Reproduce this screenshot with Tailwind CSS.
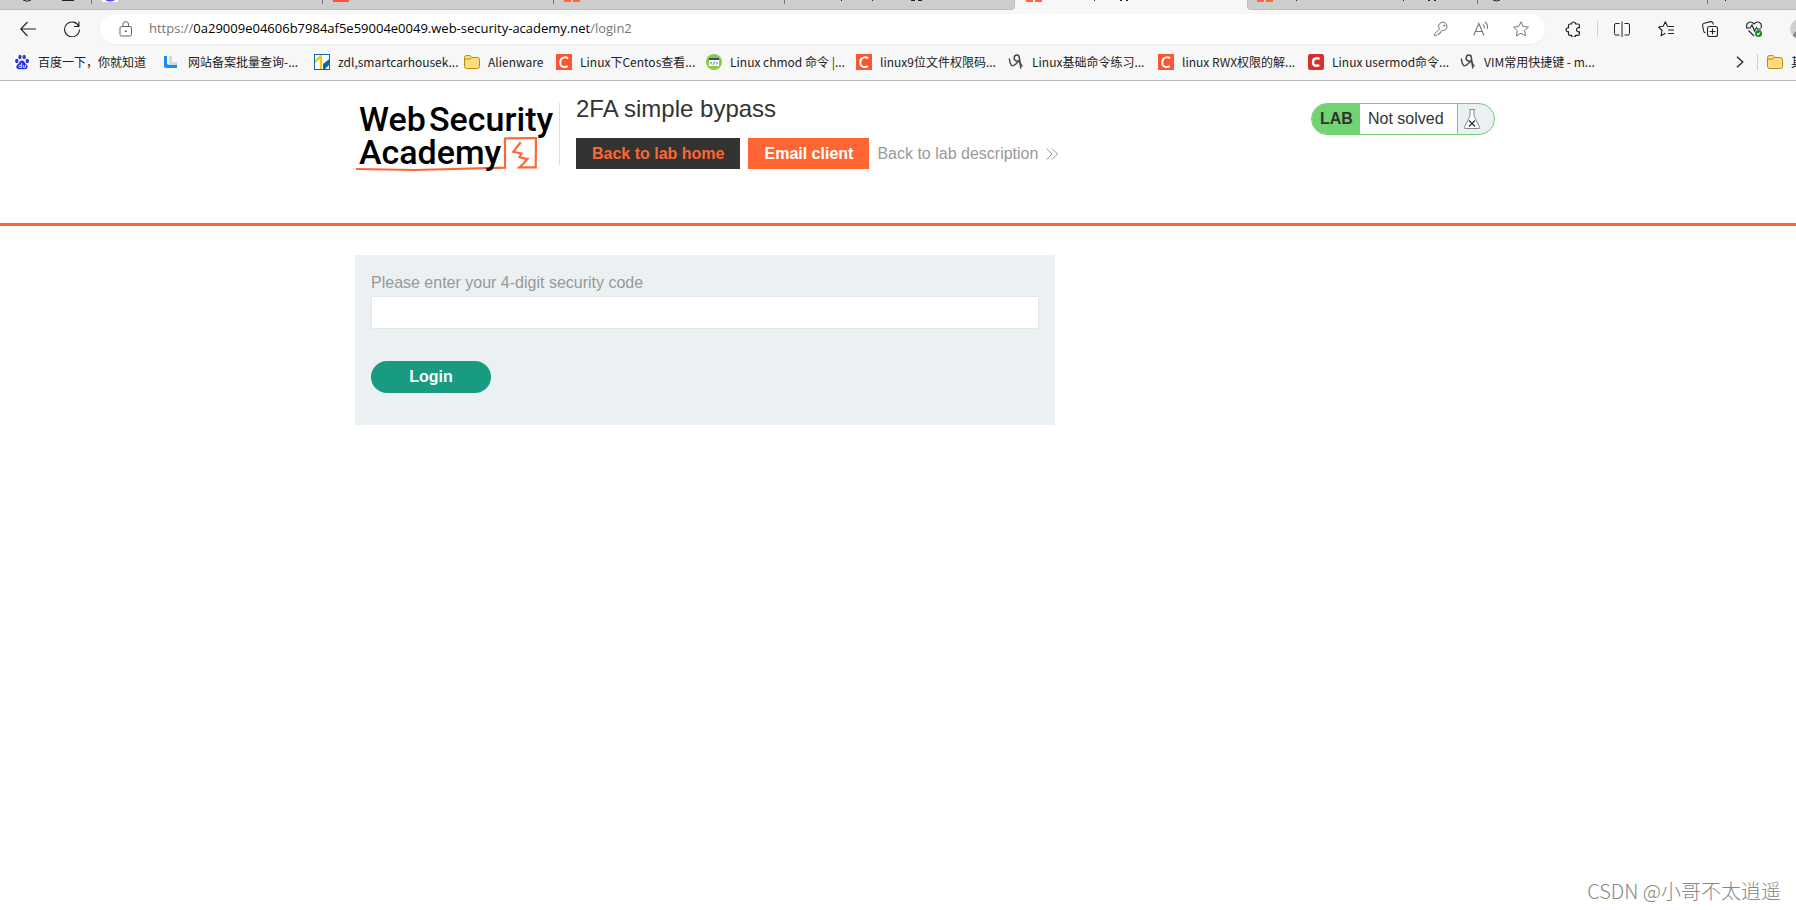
<!DOCTYPE html>
<html lang="en">
<head>
    <meta charset="UTF-8">
    <meta name="viewport" content="width=device-width, initial-scale=1.0">
    <title>2FA simple bypass</title>
    <script src="https://cdn.jsdelivr.net/npm/@tailwindcss/browser@4"></script>
</head>
<body class="relative min-h-screen overflow-x-hidden bg-white font-['Liberation_Sans',Arial,sans-serif] text-[#333332]">
    <!-- Shared icons -->
    <svg class="hidden">
        <symbol id="csdn" viewBox="0 0 16 16">
            <rect width="16" height="16" fill="#fc5531"/>
            <path d="M12.2 4.3C10 2.8 4.6 2.7 4.2 8.1c-.3 5.300 4.300 5.500 7.600 4.200" fill="none" stroke="#fff" stroke-width="2"/>
        </symbol>
        <symbol id="csdn-red" viewBox="0 0 16 16">
            <rect width="16" height="16" rx="2" fill="#d5302a"/>
            <path d="M11.600 5C9.500 3.500 5 4 5 8.200c0 4 4 4.200 6.200 2.700" fill="none" stroke="#fff" stroke-width="2.400"/>
        </symbol>
        <symbol id="folder" viewBox="0 0 16 16">
            <path d="M.5 3.500Q.5 1.500 2.500 1.500H6L8 3.500H13.500Q15.500 3.500 15.500 5.500V12.500Q15.500 14.500 13.500 14.500H2.500Q.5 14.500 .5 12.500Z" fill="#ffdc7c" stroke="#b98a14"/>
            <path d="M1 5H6L7.500 3.500" fill="none" stroke="#b98a14"/>
        </symbol>
        <symbol id="sketch" viewBox="0 0 16 16">
            <path d="M1.200 4.500C2 6 1.500 10 3.500 11.500S8 10 10.500 7.500" fill="none" stroke="#444" stroke-width="1.400"/>
            <path d="M11 6.800C8.500 8 5.700 6.500 6.200 3.500S10.800.2 11.300 3.300L12.800 14.500" fill="none" stroke="#444" stroke-width="1.500"/>
            <path d="M11.500 8L14.500 12.500" stroke="#444" stroke-width="1.300"/>
        </symbol>
    </svg>

    <!-- Tab strip, scrolled mostly out of view -->
    <div class="bg-[#f7f7f7]" role="presentation">
        <svg class="block h-[10px] w-[1796px]" viewBox="0 0 1796 10">
            <path d="M0 0H1014V7Q1014 9.500 1011 9.500H0Z" fill="#cdcdcd"/>
            <path d="M1796 0H1247.500V7Q1247.500 9.500 1250.500 9.500H1796Z" fill="#cdcdcd"/>
            <path d="M0 9.500H1011.500Q1014.500 9.500 1014.500 6.500V0M1796 9.500H1250.500Q1247.500 9.500 1247.500 6.500V0" fill="none" stroke="#bcbcbc"/>
            <path d="M91.500 0V4M322.500 0V4M553.500 0V4M784.500 0V4M1477.500 0V4M1707.500 0V4" stroke="#777"/>
            <path d="M102 0H118V2H102Z" fill="#fff"/>
            <path d="M105 0Q110 3 115 0Z" fill="#4b4be0"/>
            <path d="M333 0H349V2H333Z" fill="#fc5531"/>
            <path d="M564 0H571V2H564ZM573 0H580V2H573ZM1026 0H1033V2H1026ZM1035 0H1042V2H1035ZM1257 0H1264V2H1257ZM1266 0H1273V2H1266Z" fill="#ff6633"/>
            <path d="M23 0Q27 2.500 31 0M62 .5H74M911 .5H915M918 .5H922M1120 .5H1122M1126 .5H1128M1493 0Q1497 2 1500 0M1428 .5H1430M1434 .5H1436" fill="none" stroke="#222"/>
            <path d="M841.500 0V1M872.500 0V1M1094.500 0V1M1296.500 0V1M1403.500 0V1M1725.500 0V1" stroke="#222"/>
        </svg>
    </div>

    <!-- Browser toolbar -->
    <header class="overflow-hidden border-b border-[#b9b9b9] bg-[#f7f7f7] font-['Open_Sans','Noto_Sans_CJK_SC',sans-serif]">
        <div class="flex items-center pt-1">
            <button class="ml-5 shrink-0" aria-label="Back">
                <svg class="size-4" viewBox="0 0 16 16" fill="none" stroke="#222" stroke-width="1.100"><path d="M16 8H.8M7.500 1L.8 8l6.700 7"/></svg>
            </button>
            <button class="ml-7 shrink-0" aria-label="Refresh">
                <svg class="size-4" viewBox="0 0 16 16" fill="none" stroke="#222" stroke-width="1.100"><path d="M14.800 5.500A7.400 7.400 0 1 0 15.400 8.500M14.900.5V5.500H10"/></svg>
            </button>
            <div class="ml-5 flex h-[30px] flex-1 items-center rounded-full bg-white pr-4 pl-[18px] shadow-xs">
                <svg class="size-4 shrink-0" viewBox="0 0 16 16" fill="none" stroke="#666"><rect x="2" y="5.500" width="11.500" height="9.500" rx="1.500"/><path d="M5 5.500V3Q5 .6 7.700 .6T10.500 3V5.500"/><circle cx="7.800" cy="10.200" r=".6" fill="#666"/></svg>
                <a href="#" class="ml-[15px] text-[13px] whitespace-nowrap text-black"><span class="text-[#767676]">https://</span>0a29009e04606b7984af5e59004e0049.web-security-academy.net<span class="text-[#767676]">/login2</span></a>
                <div class="ml-auto flex items-center gap-6">
                    <button aria-label="Passwords">
                        <svg class="size-4" viewBox="0 0 16 16" fill="none" stroke="#777"><path d="M6.600 8.100A4.200 4.200 0 1 1 9 9.500L7.600 10.500V12H6.200V13.300H4.500L3.200 14.600H1.300V13Z" stroke-linejoin="round"/><circle cx="11.400" cy="4.600" r=".7"/></svg>
                    </button>
                    <button aria-label="Read aloud">
                        <svg class="size-4" viewBox="0 0 16 16" fill="none" stroke="#777" stroke-width="1.100"><path d="M.7 14.500L5.800 2.500L11 14.500M2.600 10.500H9.100M10 3.300Q11.800 4.800 11.300 7.300M12 1Q15.300 3.700 14.200 7.800"/></svg>
                    </button>
                    <button aria-label="Add to favourites">
                        <svg class="size-4" viewBox="0 0 16 16" fill="none" stroke="#777" stroke-linejoin="round"><path d="M8 .8L10.200 5.500L15.400 6.100L11.600 9.700L12.600 14.900L8 12.300L3.400 14.900L4.400 9.700L.6 6.100L5.800 5.500Z"/></svg>
                    </button>
                </div>
            </div>
            <div class="ml-5 flex shrink-0 items-center">
                <button aria-label="Extensions">
                    <svg class="size-4" viewBox="0 0 16 16" fill="none" stroke="#222" stroke-width="1.200" stroke-linejoin="round"><path d="M6.500 3A2 2 0 1 1 10.500 3H13Q14.400 3 14.400 4.300V6.800A2.100 2.100 0 1 0 14.400 10.700V13Q14.400 14.400 13 14.400H10.500A2 2 0 0 1 6.500 14.400H5Q3.500 14.400 3.500 13V10.700A2 2 0 1 1 3.500 6.800V4.300Q3.500 3 5 3Z"/></svg>
                </button>
                <span class="ml-4 h-4 w-px bg-[#cfcfcf]"></span>
                <button class="ml-4" aria-label="Split screen">
                    <svg class="size-4" viewBox="0 0 16 16" fill="none" stroke="#222"><path d="M5.500 2.500H2Q.5 2.500 .5 4V12.500Q.5 14 2 14H5.500M10.500 2.500H14Q15.500 2.500 15.500 4V12.500Q15.500 14 14 14H10.500M8 .5V16"/></svg>
                </button>
                <button class="ml-7" aria-label="Favourites">
                    <svg class="size-4" viewBox="0 0 16 16" fill="none" stroke="#222" stroke-width="1.100" stroke-linejoin="round"><path d="M10.500 5.500L9.500 5.300L7.300.8L5.200 5.300L.6 6L4 9.500L3 14.800L7.500 12.300M10.500 5.500H16M10 9H16M10 12.500H16"/></svg>
                </button>
                <button class="ml-7" aria-label="Collections">
                    <svg class="size-4" viewBox="0 0 16 16" fill="none" stroke="#222" stroke-width="1.100"><rect x="5.500" y="5.500" width="10" height="10" rx="2"/><path d="M10.500 7.500V13.500M7.500 10.500H13.500M3.500 12Q1.800 11.500 1.500 9.500L.6 4.500Q.4 2.700 2.200 2.200L8.500.6Q10.400.4 11 2.200L11.500 3.500"/></svg>
                </button>
                <button class="ml-7" aria-label="Browser essentials">
                    <svg class="size-4" viewBox="0 0 16 16" fill="none" stroke="#222" stroke-width="1.100"><path d="M1 7Q-.3 2.500 3 1.200Q6 .3 8 3Q10 .3 13 1.200Q16.300 2.500 15 7M0 7H4L6 4L8.500 10L10.500 6.500L11.500 8H15M2.500 9.500L8 15"/><circle cx="12.500" cy="12.500" r="3.500" fill="#128a18" stroke="none"/><path d="M11 12.500L12.200 13.600L14 11.500" stroke="#fff"/></svg>
                </button>
                <span class="ml-7 h-5 w-[6px] overflow-hidden">
                    <svg class="h-5 w-5" viewBox="0 0 20 20"><circle cx="10" cy="10" r="10" fill="#d2d0ce"/><circle cx="10" cy="7" r="3.500" fill="#8a8886"/><path d="M3 17Q3 12 10 12T17 17Q10 22 3 17" fill="#8a8886"/></svg>
                </span>
            </div>
        </div>

        <!-- Bookmarks bar -->
        <nav class="flex h-9 items-center gap-4 pl-[14px] font-['Noto_Sans_CJK_SC',sans-serif] text-[12px] text-[#222]">
            <a href="#" class="flex w-[134px] shrink-0 items-center gap-2 whitespace-nowrap">
                <svg class="size-4 shrink-0" viewBox="0 0 16 16" fill="#2f35d8"><rect width="16" height="16" fill="#fff"/><ellipse cx="2.800" cy="7" rx="1.700" ry="2.200"/><ellipse cx="6" cy="3" rx="1.700" ry="2.300"/><ellipse cx="10.200" cy="3" rx="1.700" ry="2.300"/><ellipse cx="13.300" cy="7" rx="1.700" ry="2.200"/><path d="M8 6.500C10.500 6.500 10.500 9 12.500 10.500S14 15.200 11 15.200H5C2 15.200 1.500 12 3.500 10.500S5.500 6.500 8 6.500Z"/><path d="M7.500 9V13.500H5.500Q4.500 12.500 5.500 11.300H7.500M9.300 11V13.300H11.500V11" fill="none" stroke="#fff" stroke-width=".8"/></svg>
                百度一下，你就知道
            </a>
            <a href="#" class="flex w-[134px] shrink-0 items-center gap-2 whitespace-nowrap">
                <svg class="size-4 shrink-0" viewBox="0 0 16 16"><path d="M5 2H8V8H13V11H5Z" fill="#d4d7dc"/><path d="M0 2H3V10L5 11H13V14H2Q0 14 0 12Z" fill="#1b8cf5"/></svg>
                网站备案批量查询-...
            </a>
            <a href="#" class="flex w-[134px] shrink-0 items-center gap-2 whitespace-nowrap">
                <svg class="size-4 shrink-0" viewBox="0 0 16 16"><rect x=".5" y=".5" width="15" height="15" fill="#fff" stroke="#0868ac"/><path d="M1 6L6 1H8V15H6V5L1 9Z" fill="#f9c80e"/><path d="M9 1V10L15 5V11L11 15H9V1Z" fill="#0868ac"/><path d="M10 1H15V5L10 9Z" fill="#fff"/></svg>
                zdl,smartcarhousek...
            </a>
            <a href="#" class="flex w-[76px] shrink-0 items-center gap-2 whitespace-nowrap">
                <svg class="size-4 shrink-0"><use href="#folder"/></svg>
                Alienware
            </a>
            <a href="#" class="flex w-[134px] shrink-0 items-center gap-2 whitespace-nowrap">
                <svg class="size-4 shrink-0"><use href="#csdn"/></svg>
                Linux下Centos查看...
            </a>
            <a href="#" class="flex w-[134px] shrink-0 items-center gap-2 whitespace-nowrap">
                <svg class="size-4 shrink-0" viewBox="0 0 16 16"><circle cx="8" cy="8" r="8" fill="#8cc84b"/><rect x="3" y="4" width="10" height="8" fill="#fff"/><path d="M3 4H13V6H3Z" fill="#35526b"/><path d="M6 7.500L4.500 9L6 10.500M10 7.500L11.500 9L10 10.500M8.500 7.500L7.500 10.500" fill="none" stroke="#35526b" stroke-width=".8"/></svg>
                Linux chmod 命令 |...
            </a>
            <a href="#" class="flex w-[136px] shrink-0 items-center gap-2 whitespace-nowrap">
                <svg class="size-4 shrink-0"><use href="#csdn"/></svg>
                linux9位文件权限码...
            </a>
            <a href="#" class="flex w-[134px] shrink-0 items-center gap-2 whitespace-nowrap">
                <svg class="size-4 shrink-0"><use href="#sketch"/></svg>
                Linux基础命令练习...
            </a>
            <a href="#" class="flex w-[134px] shrink-0 items-center gap-2 whitespace-nowrap">
                <svg class="size-4 shrink-0"><use href="#csdn"/></svg>
                linux RWX权限的解...
            </a>
            <a href="#" class="flex w-[136px] shrink-0 items-center gap-2 whitespace-nowrap">
                <svg class="size-4 shrink-0"><use href="#csdn-red"/></svg>
                Linux usermod命令...
            </a>
            <a href="#" class="flex w-[134px] shrink-0 items-center gap-2 whitespace-nowrap">
                <svg class="size-4 shrink-0"><use href="#sketch"/></svg>
                VIM常用快捷键 - m...
            </a>
            <div class="ml-auto flex shrink-0 items-center">
                <button aria-label="More bookmarks">
                    <svg class="h-3 w-2" viewBox="0 0 8 12" fill="none" stroke="#222" stroke-width="1.300"><path d="M1 .7L6.800 6L1 11.300"/></svg>
                </button>
                <span class="ml-[13px] h-4 w-px bg-[#cfcfcf]"></span>
                <a href="#" class="ml-[9px] flex w-[29px] items-center gap-2 overflow-hidden whitespace-nowrap">
                    <svg class="size-4 shrink-0"><use href="#folder"/></svg>
                    其他收藏夹
                </a>
            </div>
        </nav>
    </header>

    <!-- Lab header -->
    <section class="border-b-3 border-[#ff6633] pr-[301px] pb-[51px] pl-[355px]">
        <div class="flex items-start pt-[19px]">
            <a href="#" class="shrink-0" aria-label="Web Security Academy">
                <svg class="h-[72px] w-[204px]" viewBox="0 0 204 72">
                    <path d="M1 69L60 70L150 67.700V38.500L181 38L180.700 67.300H164.300L168 64L172.500 59L164.500 57.300L166.500 53.500L158.300 51.700L165.700 42.300" fill="none" stroke="#ff6633" stroke-width="2.200"/>
                    <g fill="#000" font-family="Roboto, sans-serif" font-weight="500" font-size="34">
                        <text x="4" y="31">Web</text>
                        <text x="74" y="31">Security</text>
                        <text x="4" y="64">Academy</text>
                    </g>
                </svg>
            </a>
            <div class="mt-[3px] h-[62px] w-px shrink-0 bg-[#dedede]"></div>
            <div class="ml-4">
                <h2 class="text-[24px] leading-[18px]">2FA simple bypass</h2>
                <div class="mt-5 flex items-center gap-2 text-[16px] leading-[31px] whitespace-nowrap">
                    <a href="#" class="bg-[#333332] px-4 font-bold text-[#ff6633]">Back to lab home</a>
                    <button class="bg-[#ff6633] px-4 font-bold text-white">Email client</button>
                    <a href="#" class="flex items-center gap-2 text-[#999]">Back to lab description
                        <svg class="h-3 w-3" viewBox="0 0 12 12" fill="none" stroke="#999"><path d="M.5 .5L6 6L.5 11.500M6 .5L11.500 6L6 11.500"/></svg>
                    </a>
                </div>
            </div>
            <div class="mt-[3px] ml-auto flex h-8 w-[184px] shrink-0 overflow-hidden rounded-full border border-[#71d371] bg-[#ebf0f2] text-[16px] leading-[30px]">
                <span class="w-12 bg-[#71d371] pl-2 font-bold">LAB</span>
                <p class="flex-1 border-r border-[#71d371] bg-white pl-2">Not solved</p>
                <span class="flex w-9 items-center pl-[6px]">
                    <svg class="h-5 w-4" viewBox="0 0 16 20" fill="#fff" stroke="#888"><path d="M5.500 .5H10.500M6 .5V7L.7 17.500V19.500H15.300V17.500L10 7V.5"/><path d="M5 11.500L11 17.500M11 11.500L5 17.500" stroke="#333" stroke-width="1.300"/></svg>
                </span>
            </div>
        </div>
    </section>

    <!-- Security code form -->
    <main class="pt-[29px] pr-[301px] pl-[355px]">
        <form class="max-w-[700px] bg-[#ebf0f2] px-4 pt-4 pb-8 text-[16px]">
            <label for="code" class="block text-[#999]">Please enter your 4-digit security code</label>
            <input id="code" name="mfa-code" type="text" class="mt-px block h-[33px] w-full border border-[#e4e6e7] bg-white px-2 outline-none">
            <button type="submit" class="mt-8 block h-8 w-30 rounded-full bg-[#179b81] font-bold text-white">Login</button>
        </form>
    </main>

    <div class="absolute right-[15px] bottom-1 font-['Noto_Sans_CJK_SC',sans-serif] text-[20px] font-light text-[#888]">CSDN @小哥不太逍遥</div>
</body>
</html>
